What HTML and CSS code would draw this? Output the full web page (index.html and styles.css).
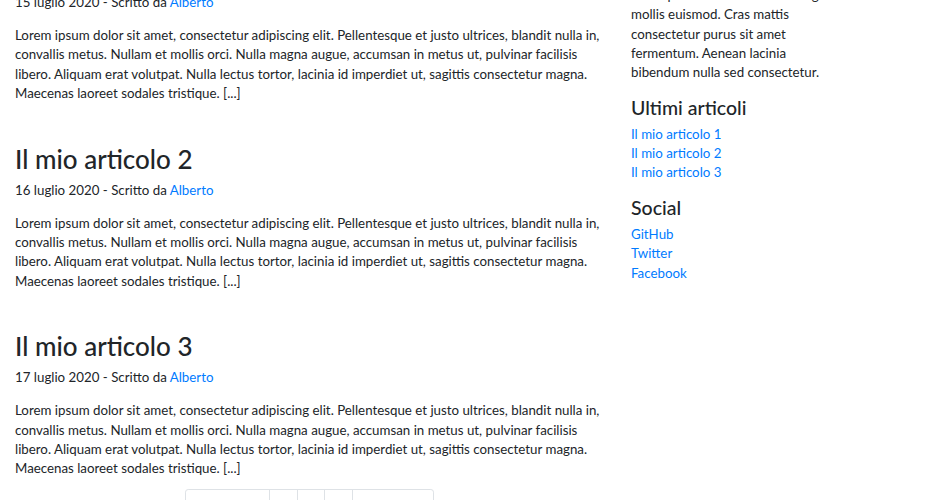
FILE: index.html
```html
<!DOCTYPE html>
<html lang="it">
<head>
<meta charset="utf-8">
<title>Blog</title>
<link rel="stylesheet" href="styles.css">
</head>
<body>
<div class="page">
  <main class="main">
    <article class="post">
      <h2 class="post-title">Il mio articolo 1</h2>
      <p class="post-meta">15 luglio 2020 - Scritto da <a href="#">Alberto</a></p>
      <p class="post-text">Lorem ipsum dolor sit amet, consectetur adipiscing elit. Pellentesque et justo ultrices, blandit nulla in, convallis metus. Nullam et mollis orci. Nulla magna augue, accumsan in metus ut, pulvinar facilisis libero. Aliquam erat volutpat. Nulla lectus tortor, lacinia id imperdiet ut, sagittis consectetur magna. Maecenas laoreet sodales tristique. [...]</p>
    </article>
    <article class="post">
      <h2 class="post-title">Il mio articolo 2</h2>
      <p class="post-meta">16 luglio 2020 - Scritto da <a href="#">Alberto</a></p>
      <p class="post-text">Lorem ipsum dolor sit amet, consectetur adipiscing elit. Pellentesque et justo ultrices, blandit nulla in, convallis metus. Nullam et mollis orci. Nulla magna augue, accumsan in metus ut, pulvinar facilisis libero. Aliquam erat volutpat. Nulla lectus tortor, lacinia id imperdiet ut, sagittis consectetur magna. Maecenas laoreet sodales tristique. [...]</p>
    </article>
    <article class="post post-last">
      <h2 class="post-title">Il mio articolo 3</h2>
      <p class="post-meta">17 luglio 2020 - Scritto da <a href="#">Alberto</a></p>
      <p class="post-text">Lorem ipsum dolor sit amet, consectetur adipiscing elit. Pellentesque et justo ultrices, blandit nulla in, convallis metus. Nullam et mollis orci. Nulla magna augue, accumsan in metus ut, pulvinar facilisis libero. Aliquam erat volutpat. Nulla lectus tortor, lacinia id imperdiet ut, sagittis consectetur magna. Maecenas laoreet sodales tristique. [...]</p>
    </article>
    <nav class="pager">
      <ul class="pagination">
        <li><a class="page-link" href="#">Precedente</a></li>
        <li><a class="page-link" href="#">1</a></li>
        <li><a class="page-link" href="#">2</a></li>
        <li><a class="page-link" href="#">3</a></li>
        <li><a class="page-link" href="#">Successivo</a></li>
      </ul>
    </nav>
  </main>
  <aside class="sidebar">
    <h4 class="side-title">Chi sono</h4>
    <p class="side-text">Etiam porta sem malesuada magna mollis euismod. Cras mattis consectetur purus sit amet fermentum. Aenean lacinia bibendum nulla sed consectetur.</p>
    <h4 class="side-title">Ultimi articoli</h4>
    <ul class="side-list">
      <li><a href="#">Il mio articolo 1</a></li>
      <li><a href="#">Il mio articolo 2</a></li>
      <li><a href="#">Il mio articolo 3</a></li>
    </ul>
    <h4 class="side-title">Social</h4>
    <ul class="side-list">
      <li><a href="#">GitHub</a></li>
      <li><a href="#">Twitter</a></li>
      <li><a href="#">Facebook</a></li>
    </ul>
  </aside>
</div>
</body>
</html>
```
FILE: styles.css
```css
html, body {
  margin: 0;
  padding: 0;
  background: #fff;
  overflow: hidden;
}
body {
  font-family: "Lato", "Open Sans", sans-serif;
  font-size: 13.3px;
  line-height: 19.35px;
  color: #212529;
}
a {
  color: #007bff;
  text-decoration: none;
}
.page {
  display: grid;
  grid-template-columns: 589px 205px;
  column-gap: 27px;
  padding-left: 15px;
  margin-top: -44px;
  align-items: start;
}
.main {
  min-width: 0;
}
.post {
  margin-bottom: 40px;
}
.post-last {
  margin-bottom: 0;
}
.post-title {
  font-size: 26px;
  line-height: 31px;
  font-weight: 500;
  margin: 0 0 6px;
}
.post-meta {
  margin: 0 0 13.8px;
}
.post-text {
  margin: 0 0 12.8px;
}
.post-last .post-text {
  margin-bottom: 10.8px;
}
.pager {
  display: flex;
  justify-content: center;
}
.pagination {
  display: flex;
  list-style: none;
  margin: 0;
  padding: 0;
  font-size: 12.8px;
}
.page-link {
  display: block;
  padding: 7.4px 9.6px;
  line-height: 16px;
  border: 1px solid #dee2e6;
  margin-left: -1px;
}
.pagination li:first-child .page-link {
  margin-left: 0;
  border-radius: 3.2px 0 0 3.2px;
}
.pagination li:last-child .page-link {
  border-radius: 0 3.2px 3.2px 0;
}
.sidebar {
  margin-top: 1px;
}
.side-title {
  font-size: 19.5px;
  line-height: 23px;
  font-weight: 500;
  margin: 0 0 6px;
}
.side-text {
  margin: 0 0 12.8px;
}
.side-list {
  list-style: none;
  margin: 0 0 13.5px;
  padding: 0;
}
```
